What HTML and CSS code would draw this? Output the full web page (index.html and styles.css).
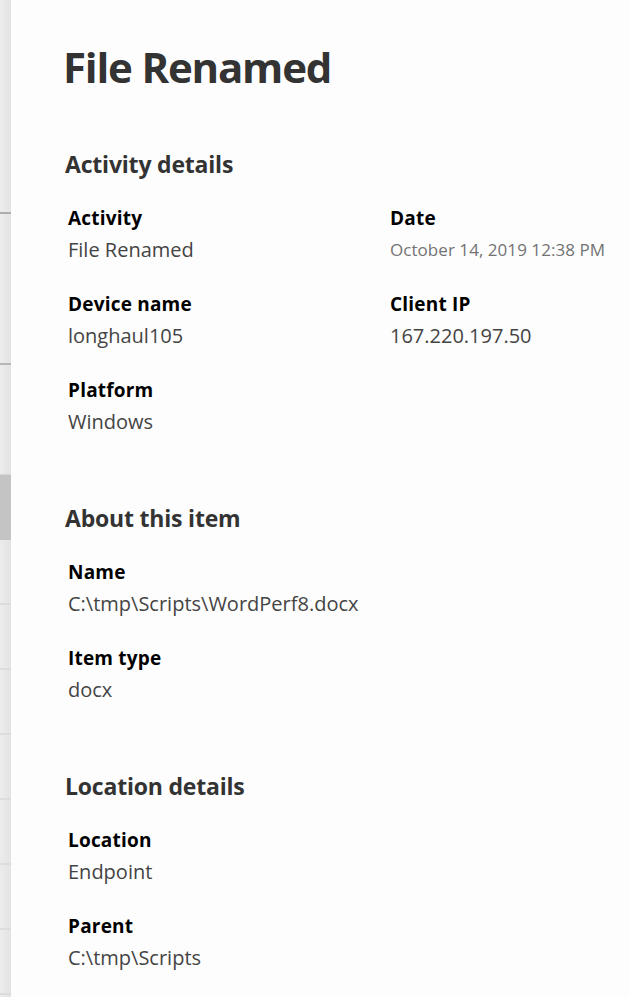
FILE: index.html
```html
<!DOCTYPE html>
<html lang="en">
<head>
<meta charset="utf-8">
<title>File Renamed</title>
<link rel="stylesheet" href="styles.css">
</head>
<body>
<div class="page">
  <div class="rail">
    <div class="rail-row r1"></div>
    <div class="rail-row r2"></div>
    <div class="rail-row r3"></div>
    <div class="rail-row selected"></div>
    <div class="rail-row light"></div>
    <div class="rail-row light"></div>
    <div class="rail-row light"></div>
    <div class="rail-row light"></div>
    <div class="rail-row light"></div>
    <div class="rail-row light"></div>
    <div class="rail-row light"></div>
  </div>
  <main class="panel">
    <h1 class="title">File Renamed</h1>

    <section class="section">
      <h2 class="section-title">Activity details</h2>
      <div class="fields">
        <div class="field">
          <div class="label">Activity</div>
          <div class="value">File Renamed</div>
        </div>
        <div class="field">
          <div class="label">Date</div>
          <div class="value small">October 14, 2019 12:38 PM</div>
        </div>
        <div class="field">
          <div class="label">Device name</div>
          <div class="value">longhaul105</div>
        </div>
        <div class="field">
          <div class="label">Client IP</div>
          <div class="value">167.220.197.50</div>
        </div>
        <div class="field">
          <div class="label">Platform</div>
          <div class="value">Windows</div>
        </div>
      </div>
    </section>

    <section class="section">
      <h2 class="section-title">About this item</h2>
      <div class="fields">
        <div class="field wide">
          <div class="label">Name</div>
          <div class="value">C:\tmp\Scripts\WordPerf8.docx</div>
        </div>
        <div class="field wide">
          <div class="label">Item type</div>
          <div class="value">docx</div>
        </div>
      </div>
    </section>

    <section class="section">
      <h2 class="section-title">Location details</h2>
      <div class="fields">
        <div class="field wide">
          <div class="label">Location</div>
          <div class="value">Endpoint</div>
        </div>
        <div class="field wide">
          <div class="label">Parent</div>
          <div class="value">C:\tmp\Scripts</div>
        </div>
      </div>
    </section>
  </main>
</div>
</body>
</html>
```

FILE: styles.css
```css
* { box-sizing: border-box; }

html, body {
  margin: 0;
  padding: 0;
  height: 100%;
  overflow: hidden;
  background: #fdfdfd;
}

.page {
  display: flex;
  height: 997px;
  font-family: "Open Sans", "Noto Sans", sans-serif;
}

.rail {
  width: 11px;
  flex: none;
  display: flex;
  flex-direction: column;
  background: linear-gradient(to right, #ececec, #e3e3e3);
}

.rail-row { flex: none; }
.rail-row.r1 { height: 214px; border-bottom: 2px solid #adadad; }
.rail-row.r2 { height: 151px; border-bottom: 2px solid #b6b6b6; }
.rail-row.r3 { height: 110px; border-bottom: 1px solid #d6d6d6; }
.rail-row.selected { height: 65px; background: #c4c4c4; }
.rail-row.light { height: 65px; border-bottom: 2px solid #dcdcdc; }

.panel {
  flex: 1;
  padding: 39px 0 0 52px;
  color: #323130;
}

.title {
  margin: 0;
  font-size: 42px;
  line-height: 56px;
  font-weight: 700;
  letter-spacing: -1.2px;
  color: #333333;
}

.section { margin-top: 54px; }
.section + .section { margin-top: 65px; }

.section-title {
  margin: 0;
  padding-left: 2px;
  font-size: 23px;
  line-height: 30px;
  font-weight: 700;
  letter-spacing: -0.2px;
  color: #333333;
}

.fields {
  margin-top: 23px;
  padding-left: 5px;
  display: grid;
  grid-template-columns: 322px 1fr;
  row-gap: 22px;
}

.field.wide { grid-column: 1 / -1; }

.label {
  font-size: 19px;
  line-height: 32px;
  font-weight: 700;
  letter-spacing: 0.2px;
  color: #000000;
}

.value {
  font-size: 20px;
  line-height: 32px;
  font-weight: 400;
  letter-spacing: 0;
  color: #444444;
}

.value.small {
  font-size: 17px;
  color: #737373;
  letter-spacing: 0.05px;
}
```
